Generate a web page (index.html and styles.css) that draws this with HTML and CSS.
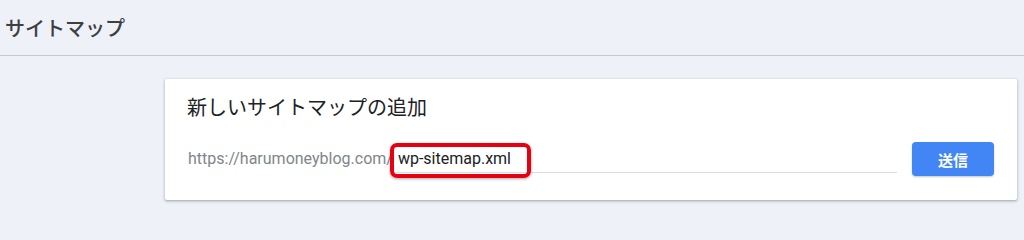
FILE: index.html
```html
<!DOCTYPE html>
<html lang="ja">
<head>
<meta charset="utf-8">
<title>サイトマップ</title>
<link rel="stylesheet" href="styles.css">
</head>
<body>
<header class="page-header">
  <h1 class="page-title">サイトマップ</h1>
</header>
<main class="content">
  <section class="card">
    <h2 class="card-title">新しいサイトマップの追加</h2>
    <div class="add-row">
      <span class="prefix">https://harumoneyblog.com/</span>
      <div class="field">
        <span class="field-value">wp-sitemap.xml</span>
        <span class="highlight"></span>
      </div>
      <button class="submit" type="button">送信</button>
    </div>
  </section>
</main>
</body>
</html>
```
FILE: styles.css
```css
html, body {
  margin: 0;
  padding: 0;
}
body {
  background: #eef1f7;
  font-family: Roboto, "Noto Sans CJK JP", "Noto Sans", sans-serif;
  color: #3c4043;
  width: 1024px;
  height: 214px;
  overflow: hidden;
}
.page-header {
  height: 55px;
  border-bottom: 1px solid #c5c8ce;
  display: flex;
  align-items: center;
  padding-left: 5px;
}
.page-title {
  margin: 0;
  font-size: 20px;
  font-weight: 500;
  line-height: 28px;
  color: #3c4043;
  font-family: "Noto Sans CJK JP", sans-serif;
}
.content {
  padding: 23px 7px 0 165px;
}
.card {
  background: #fff;
  box-shadow: 0 1px 2px rgba(60, 64, 67, 0.3), 0 1px 3px 1px rgba(60, 64, 67, 0.12);
  border-radius: 2px;
  padding: 14px 23px 24px 22px;
  height: 121px;
  box-sizing: border-box;
}
.card-title {
  margin: 0;
  font-size: 20px;
  font-weight: 400;
  line-height: 28px;
  color: #202124;
  font-family: "Noto Sans CJK JP", sans-serif;
}
.add-row {
  display: flex;
  align-items: center;
  margin-top: 21px;
}
.prefix {
  font-size: 16px;
  color: #80868b;
  white-space: nowrap;
  line-height: 20px;
  padding-left: 1px;
}
.field {
  position: relative;
  flex: 1;
  height: 28px;
  border-bottom: 1px solid #dadce0;
  box-sizing: border-box;
  display: flex;
  align-items: center;
  padding-left: 5px;
}
.field-value {
  font-size: 16px;
  color: #202124;
  line-height: 20px;
}
.highlight {
  position: absolute;
  left: -3px;
  top: -2px;
  width: 141px;
  height: 35px;
  border: 4px solid #e60012;
  border-radius: 7px;
  box-sizing: border-box;
  box-shadow: 0 1px 3px rgba(0, 0, 0, 0.35);
}
.submit {
  margin-left: 15px;
  width: 82px;
  height: 34px;
  border: none;
  border-radius: 4px;
  background: #4285f4;
  color: #fff;
  font-family: "Noto Sans CJK JP", sans-serif;
  font-size: 15px;
  font-weight: 700;
  box-shadow: 0 1px 2px rgba(60, 64, 67, 0.3);
  padding: 0;
  cursor: pointer;
}
```
